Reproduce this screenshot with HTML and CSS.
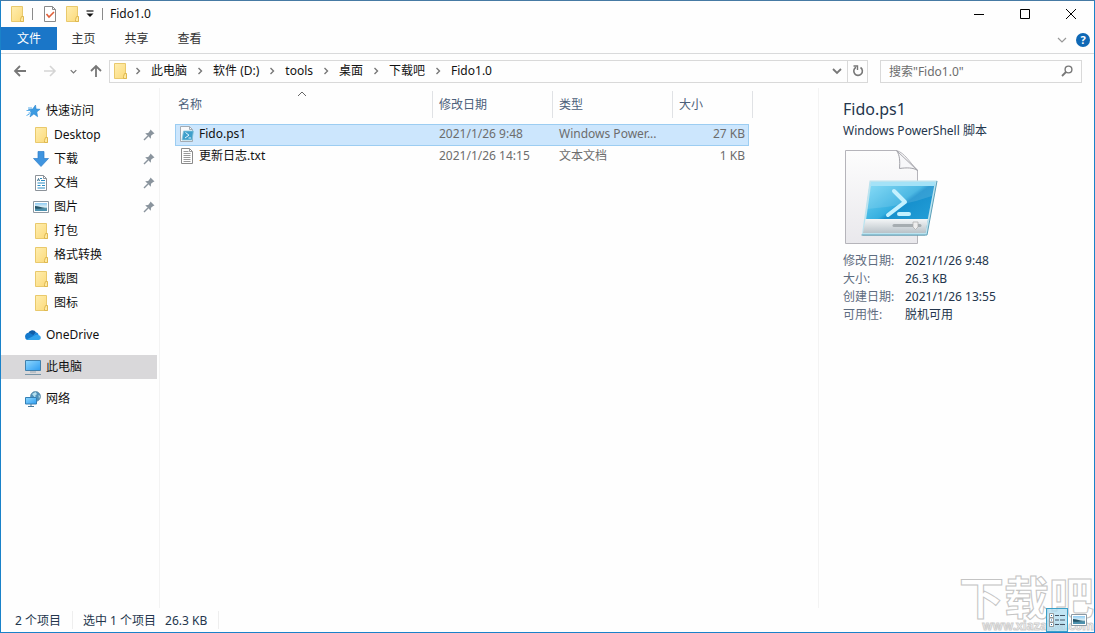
FILE: index.html
```html
<!DOCTYPE html>
<html lang="zh-CN">
<head>
<meta charset="utf-8">
<title>Fido1.0</title>
<link rel="stylesheet" href="styles.css">
</head>
<body>
<svg class="defs" width="0" height="0" aria-hidden="true">
  <defs>
    <linearGradient id="gFolder" x1="0" x2="1" y1="0" y2="1"><stop offset="0" stop-color="#ffeeb0"/><stop offset="1" stop-color="#fbd978"/></linearGradient>
    <linearGradient id="gScreen" x1="0" x2="1" y1="0" y2="1"><stop offset="0" stop-color="#8fd8ff"/><stop offset="1" stop-color="#2d9cf0"/></linearGradient>
    <linearGradient id="gPage" x1="0" x2="0" y1="0" y2="1"><stop offset="0" stop-color="#fdfdfd"/><stop offset="1" stop-color="#e9e8ec"/></linearGradient>
    <linearGradient id="gShell" x1="0" x2="1" y1="0" y2="1"><stop offset="0" stop-color="#7fdcf8"/><stop offset=".45" stop-color="#35afe0"/><stop offset=".5" stop-color="#1690cd"/><stop offset="1" stop-color="#2aa5dc"/></linearGradient>
    <linearGradient id="gBar" x1="0" x2="0" y1="0" y2="1"><stop offset="0" stop-color="#f4f6f7"/><stop offset="1" stop-color="#b9c2c8"/></linearGradient>
    <linearGradient id="gSea" x1="0" x2="0" y1="0" y2="1"><stop offset="0" stop-color="#8ecbf3"/><stop offset=".5" stop-color="#e0f0f5"/><stop offset=".7" stop-color="#4f8ca4"/><stop offset="1" stop-color="#4b94b4"/></linearGradient>
    <symbol id="folder" viewBox="0 0 16 16"><path d="M2.500.5h11v10l1 .5v4.500h-12z" fill="url(#gFolder)" stroke="#e9c96c"/><path d="M11.500 15.500v-2l1-3h2v5z" fill="#ffe9a0" stroke="#dfb850"/></symbol>
    <symbol id="star" viewBox="0 0 16 16"><path d="M10.500 2l.6 4 4 .3-3.300 2.600.8 4.800-3.700-2.800L5 14l1.300-4.800L3.500 6.500l4.200-.4z" fill="#3c9be2" stroke="#2b86d0" stroke-width=".6"/><path d="M3 5h4M1.500 7.500h4M3.500 10H6M1.500 12.500l3-1.500" stroke="#5aaeea" stroke-width="1"/></symbol>
    <symbol id="down" viewBox="0 0 16 16"><path d="M5 .5h6v7h4.500L8 15.500.5 7.500H5z" fill="#3f94df" stroke="#2d7cc8" stroke-width=".7"/></symbol>
    <symbol id="doc" viewBox="0 0 16 16"><path d="M2.500.5h8l3 3v12h-11z" fill="#fff" stroke="#8c9299"/><path d="M10.500.5v3h3" fill="none" stroke="#8c9299"/><path d="M7 3.500h2M8 5.500h4M4.500 8h7.500M4.500 10.500h3M9 10.500h3M4.500 13h7.500" stroke="#2c8ec4" stroke-width="1.200"/><path d="M4.500 6l1-2.500 1 2.500" fill="none" stroke="#3b6f8c"/></symbol>
    <symbol id="pic" viewBox="0 0 16 16"><path d="M.5 2.500h15v11H.5z" fill="#fff" stroke="#8d99a3"/><path d="M2 4h12v8H2z" fill="url(#gSea)"/><path d="M2 7c3 0 6 1.500 10 2-4 .5-7 1-10 .5z" fill="#245468"/></symbol>
    <symbol id="cloud" viewBox="0 0 16 16"><path d="M3.200 6.200a4.300 4.300 0 0 1 7.900-.8L8 9z" fill="#0f5ea8"/><path d="M.2 10.300a3.500 3.500 0 0 1 4.600-4.200L11 9.500 3 13A2.800 2.800 0 0 1 .2 10.300z" fill="#1479cc"/><path d="M8 8.500l3-3.200a3.400 3.400 0 0 1 2.700 3l-2 3z" fill="#1b86dc"/><path d="M1.500 12.500L8.500 9l3-1.200c2.400 0 4.300.7 4.300 2.900 0 1.300-1 2.300-2.300 2.300h-10z" fill="#32a4ec"/></symbol>
    <symbol id="pc" viewBox="0 0 16 16"><path d="M.5 1.500h15v10H.5z" fill="url(#gScreen)" stroke="#4080ac"/><path d="M5 13h6" stroke="#9aa8b2"/><path d="M0 15.500h16" stroke="#7894a6"/></symbol>
    <symbol id="net" viewBox="0 0 16 16"><circle cx="10.500" cy="5.500" r="5" fill="#4f8fb8" stroke="#5b8aa5" stroke-width=".7"/><path d="M7 3l3.500-2L12 3l-2 2 2 2-1 1zM13.500 4l1.500 1-1 3z" fill="#b5dfee"/><path d="M.5 6.500h11v6.500H.5z" fill="url(#gScreen)" stroke="#347fb4"/><path d="M6 13v2M3 15.500h6" stroke="#47799b"/></symbol>
    <symbol id="pin" viewBox="0 0 12 12"><path d="M7.500.5l4 4-1.300.5-2.200 1.800-.2 3L2.200 4.200l3-.2L7 1.800z" fill="#8a949d"/><path d="M5 7L1 11" stroke="#8a949d" stroke-width="1.400"/></symbol>
    <symbol id="crumb" viewBox="0 0 8 8"><path d="M2.500 1l3 3-3 3" fill="none" stroke="#777" stroke-width="1.400"/></symbol>
    <symbol id="chev" viewBox="0 0 10 10"><path d="M1 3l4 4 4-4" fill="none" stroke="currentColor" stroke-width="1.800"/></symbol>
    <symbol id="arrow" viewBox="0 0 14 14"><path d="M13 7H2M7 2L2 7l5 5" fill="none" stroke="currentColor" stroke-width="1.800"/></symbol>
    <symbol id="arrow-right" viewBox="0 0 14 14"><path d="M1 7h11M7 2l5 5-5 5" fill="none" stroke="currentColor" stroke-width="1.600"/></symbol>
    <symbol id="ps" viewBox="0 0 16 16"><path d="M1.500.5h9l3 3v12h-12z" fill="#f8f9fb" stroke="#a3abb3"/><path d="M10.500.5v3h3" fill="none" stroke="#a3abb3"/><path d="M4.500 5h10L13 14H3z" fill="#3f9fcb" stroke="#8cc6dd" stroke-width=".8"/><path d="M6.500 6.500L10 9.200 6 12M9.500 12h2.500" fill="none" stroke="#e3f6ff"/></symbol>
    <symbol id="txt" viewBox="0 0 16 16"><path d="M2.500.5h8l3 3v12h-11z" fill="#fff" stroke="#8a8a8a"/><path d="M10.500.5v3h3M4.500 3.500h5M4.500 5.500h7M4.500 7.500h7M4.500 9.500h7M4.500 11.500h7M4.500 13.500h7" fill="none" stroke="#999"/></symbol>
  </defs>
</svg>
<div class="window">
  <header class="titlebar">
    <svg class="i16"><use href="#folder"/></svg>
    <span class="rule rule-a"></span>
    <button class="bare" aria-label="属性"><svg class="i16" viewBox="0 0 16 16"><path d="M2.500.5h8l3 3v12h-11z" fill="#fff" stroke="#8a8a8a"/><path d="M10.500.5v3h3" fill="none" stroke="#8a8a8a"/><path d="M4.500 8l2.500 3 5-5" fill="none" stroke="#e0603a" stroke-width="1.600"/></svg></button>
    <button class="bare qa-folder" aria-label="新建文件夹"><svg class="i16"><use href="#folder"/></svg></button>
    <button class="bare qa-more" aria-label="自定义快速访问工具栏"><svg width="8" height="8" viewBox="0 0 8 8"><path d="M.5 1h7" stroke="#222" stroke-width="1.300"/><path d="M.5 3.500h7L4 7z" fill="#111"/></svg></button>
    <span class="rule rule-b"></span>
    <h1 class="caption">Fido1.0</h1>
    <div class="winbtns">
      <button class="bare" aria-label="最小化"><svg width="12" height="12"><path d="M1 6.500h10" stroke="#000"/></svg></button>
      <button class="bare" aria-label="最大化"><svg width="12" height="12"><path d="M1.500 1.500h9v9h-9z" fill="none" stroke="#000"/></svg></button>
      <button class="bare" aria-label="关闭"><svg width="12" height="12"><path d="M1 1l10 10M11 1L1 11" stroke="#000"/></svg></button>
    </div>
  </header>
  <div class="ribbon">
    <button class="tab tab-file">文件</button>
    <button class="tab">主页</button>
    <button class="tab">共享</button>
    <button class="tab">查看</button>
    <div class="ribbon-end">
      <button class="bare expand" aria-label="展开功能区"><svg width="10" height="10" viewBox="0 0 10 10"><path d="M1 3l4 4 4-4" fill="none" stroke="#999" stroke-width="1.200"/></svg></button>
      <button class="bare help" aria-label="帮助">?</button>
    </div>
  </div>
  <div class="addressbar">
    <button class="bare back" aria-label="后退"><svg width="14" height="14"><use href="#arrow"/></svg></button>
    <button class="bare forward" aria-label="前进"><svg width="14" height="14"><use href="#arrow-right"/></svg></button>
    <button class="bare recent" aria-label="最近位置"><svg width="7" height="7"><use href="#chev"/></svg></button>
    <button class="bare up" aria-label="上移"><svg width="14" height="14" viewBox="0 0 14 14"><path d="M7 13V2M2 7l5-5 5 5" fill="none" stroke="#777" stroke-width="1.800"/></svg></button>
    <nav class="path" aria-label="路径">
      <svg class="i16"><use href="#folder"/></svg>
      <svg class="sep first"><use href="#crumb"/></svg><a href="#">此电脑</a>
      <svg class="sep"><use href="#crumb"/></svg><a href="#">软件 (D:)</a>
      <svg class="sep"><use href="#crumb"/></svg><a href="#">tools</a>
      <svg class="sep"><use href="#crumb"/></svg><a href="#">桌面</a>
      <svg class="sep"><use href="#crumb"/></svg><a href="#">下载吧</a>
      <svg class="sep"><use href="#crumb"/></svg><a href="#">Fido1.0</a>
      <button class="bare drop" aria-label="以前的位置"><svg width="10" height="10"><use href="#chev"/></svg></button>
      <button class="bare refresh" aria-label="刷新"><svg width="12" height="12" viewBox="0 0 12 12"><path d="M4 2.300a4.300 4.300 0 1 0 4.500.2" fill="none" stroke="#777" stroke-width="1.600"/><path d="M1.500 1h4v4" fill="none" stroke="#777" stroke-width="1.400"/></svg></button>
    </nav>
    <label class="search">
      <input type="text" placeholder="搜索&quot;Fido1.0&quot;" aria-label="搜索">
      <svg width="12" height="12" viewBox="0 0 12 12"><circle cx="7.500" cy="4.500" r="3.400" fill="none" stroke="#777" stroke-width="1.400"/><path d="M5 7L1 11" stroke="#777" stroke-width="1.800"/></svg>
    </label>
  </div>
  <main class="content">
    <nav class="tree" aria-label="导航窗格">
      <a class="node" href="#"><svg class="i16"><use href="#star"/></svg>快速访问</a>
      <a class="node child" href="#"><svg class="i16"><use href="#folder"/></svg>Desktop<svg class="pin"><use href="#pin"/></svg></a>
      <a class="node child" href="#"><svg class="i16"><use href="#down"/></svg>下载<svg class="pin"><use href="#pin"/></svg></a>
      <a class="node child" href="#"><svg class="i16"><use href="#doc"/></svg>文档<svg class="pin"><use href="#pin"/></svg></a>
      <a class="node child" href="#"><svg class="i16"><use href="#pic"/></svg>图片<svg class="pin"><use href="#pin"/></svg></a>
      <a class="node child" href="#"><svg class="i16"><use href="#folder"/></svg>打包</a>
      <a class="node child" href="#"><svg class="i16"><use href="#folder"/></svg>格式转换</a>
      <a class="node child" href="#"><svg class="i16"><use href="#folder"/></svg>截图</a>
      <a class="node child" href="#"><svg class="i16"><use href="#folder"/></svg>图标</a>
      <a class="node root" href="#"><svg class="i16"><use href="#cloud"/></svg>OneDrive</a>
      <a class="node root current" href="#"><svg class="i16"><use href="#pc"/></svg>此电脑</a>
      <a class="node root" href="#"><svg class="i16"><use href="#net"/></svg>网络</a>
    </nav>
    <section class="files">
      <table>
        <colgroup><col class="c-name"><col class="c-date"><col class="c-type"><col class="c-size"><col class="c-end"></colgroup>
        <thead><tr>
          <th><div class="head">名称<svg class="sort" width="10" height="6"><path d="M1 5l4-4 4 4" fill="none" stroke="#666"/></svg></div></th>
          <th><div class="head">修改日期</div></th><th><div class="head">类型</div></th><th><div class="head open">大小</div></th><th><div class="head end"></div></th>
        </tr></thead>
        <tbody>
          <tr class="selected"><td class="name"><span><svg class="i16"><use href="#ps"/></svg>Fido.ps1</span></td><td>2021/1/26 9:48</td><td>Windows Power...</td><td class="num">27 KB</td></tr>
          <tr><td class="name"><span><svg class="i16"><use href="#txt"/></svg>更新日志.txt</span></td><td>2021/1/26 14:15</td><td>文本文档</td><td class="num">1 KB</td></tr>
        </tbody>
      </table>
    </section>
    <aside class="details">
      <h2>Fido.ps1</h2>
      <p class="kind">Windows PowerShell 脚本</p>
      <svg class="preview" width="96" height="96" viewBox="0 0 96 96">
        <path d="M2.500 1.500h51C62 4 66 13 74.500 21v73.500h-72z" fill="url(#gPage)" stroke="#b5b4ba"/>
        <path d="M53.500 1.500C57 6 57 13 56.500 19.500c7-1 14-1 18 2z" fill="#f7f7f9" stroke="#a2a2a8"/>
        <path d="M27 32h65L83 84.500l-1 2.500H19.500z" fill="#7c929e" opacity=".45"/>
        <path d="M27.500 32.500H93L83 85H20z" fill="url(#gShell)" stroke="#bce3ef" stroke-width="2"/>
        <path d="M22.500 70h62.500l-2.500 14H20z" fill="url(#gBar)"/>
        <path d="M28 33H92.500l-1 4H27z" fill="#a4e2f7"/>
        <path d="M24 60Q58 58 89 47L91 37H28z" fill="#fff" opacity=".12"/>
        <path d="M51 42l11 11-17 13M56 65h10" fill="none" stroke="#c4f1ff" stroke-width="4" stroke-linecap="round" stroke-linejoin="round"/>
        <path d="M51 76.500h26" stroke="#a6adb1" stroke-width="3" stroke-linecap="round"/>
        <path d="M70 73h5v5l-2.500 2.500L70 78z" fill="#eee" stroke="#aaa" stroke-width=".7"/>
        <path d="M18.500 86H84L94 32" fill="none" stroke="#5b9fb8"/>
      </svg>
      <dl>
        <dt>修改日期:</dt><dd>2021/1/26 9:48</dd>
        <dt>大小:</dt><dd>26.3 KB</dd>
        <dt>创建日期:</dt><dd>2021/1/26 13:55</dd>
        <dt>可用性:</dt><dd>脱机可用</dd>
      </dl>
    </aside>
  </main>
  <footer class="status">
    <span class="cell">2 个项目</span>
    <span class="cell"><span>选中 1 个项目</span><span>26.3 KB</span></span>
    <div class="views">
      <button class="view on" aria-label="详细信息"><svg width="16" height="14"><path d="M.5.5h4v4h-4zM.5 5h4v4h-4zM.5 9.500h4v4h-4z" fill="#fff" stroke="#888" stroke-width=".8"/><path d="M2 2.500h1M2 7h1M2 11.500h1" stroke="#176faa"/><path d="M6 2.500h4M11 2.500h5M6 7h4M11 7h5M6 11.500h4M11 11.500h5" stroke="#456"/></svg></button>
      <button class="view" aria-label="大图标"><svg width="16" height="16"><use href="#pic"/></svg></button>
    </div>
  </footer>
  <div class="watermark"><span class="wm-name">下载吧</span><span class="wm-site">www.xiazaiba.com</span></div>
</div>
</body>
</html>
```
FILE: styles.css
```css
* { box-sizing: border-box; }
body {
  margin: 0;
  font: 12px/18px "Noto Sans", "Noto Sans CJK SC", sans-serif;
  color: #111;
  background: #fff;
}
a { color: inherit; text-decoration: none; }
h1, h2, p, dl, dd { margin: 0; font-weight: 400; }
button, input { font: inherit; color: inherit; }
svg { display: block; flex: none; }
.defs { position: absolute; }
.i16 { width: 16px; height: 16px; }
.bare { border: 0; padding: 0; background: none; display: flex; align-items: center; justify-content: center; }

.window {
  position: relative;
  display: flex;
  flex-direction: column;
  min-height: 100vh;
  border: 1px solid #1a82c9;
  border-top-color: #467aa4;
  background: #fefefe;
}
.titlebar { display: flex; align-items: center; height: 26px; padding-left: 8px; }
.rule { width: 1px; height: 12px; background: #8a8a8a; }
.rule-a { margin: 0 9px 0 7px; }
.rule-b { margin: 0 7px 0 8px; }
.qa-folder { margin-left: 6px; }
.qa-more { margin-left: 6px; }
.caption { font-size: 12px; }
.winbtns { display: flex; margin-left: auto; }
.winbtns .bare { width: 46px; height: 25px; }

.ribbon { display: flex; height: 27px; border-bottom: 1px solid #d9dadb; }
.tab { width: 53px; height: 23px; padding: 0; border: 0; background: none; color: #333; }
.tab-file { width: 56px; background: #1a76c8; color: #fff; }
.ribbon-end { display: flex; gap: 9px; margin-left: auto; padding-right: 4px; align-items: center; }
.help { width: 14px; height: 14px; border-radius: 50%; background: #0f68b5; color: #fff; font-weight: 700; font-size: 11px; line-height: 14px; }

.addressbar { display: flex; align-items: center; height: 34px; padding: 0 12px; color: #777; }
.forward { margin-left: 16px; color: #d5d5d5; }
.recent { margin-left: 13px; }
.up { margin: 0 6px 0 12px; }
.path { flex: 1; display: flex; align-items: center; height: 23px; border: 1px solid #d9d9d9; color: #111; padding-left: 2px; }
.sep { width: 8px; height: 8px; margin: 0 9px; }
.sep.first { margin: 0 9px 0 6px; }
.drop { width: 20px; height: 21px; margin-left: auto; color: #777; }
.refresh { width: 20px; height: 21px; border-left: 1px solid #d9d9d9; }
.search { display: flex; align-items: center; width: 202px; height: 23px; margin-left: 12px; padding: 0 8px; border: 1px solid #d9d9d9; }
.search input { flex: 1; min-width: 0; height: 20px; padding: 0; border: 0; outline: 0; background: none; }
.search input::placeholder { color: #6d6d6d; opacity: 1; }

.content { flex: 1; display: flex; }
.tree { width: 159px; padding: 11px 2px 0 0; border-right: 1px solid #f3f3f3; }
.node { display: flex; align-items: center; gap: 5px; height: 24px; padding: 0 2px 0 24px; }
.child { padding-left: 32px; }
.root { margin-top: 8px; }
.current { background: #d9d8da; }
.pin { width: 12px; height: 12px; margin-left: auto; }

.files { flex: 1; padding: 3px 15px 0; }
table { border-collapse: separate; border-spacing: 0; table-layout: fixed; width: 578px; }
.c-name { width: 258px; }
.c-date, .c-type { width: 120px; }
.c-size { width: 76px; }
.c-end { width: 4px; }
th { padding: 0 0 6px; font-weight: 400; text-align: left; color: #4c607a; }
.head { position: relative; height: 27px; padding-left: 6px; line-height: 27px; border-right: 1px solid #e0e2e5; }
.head.open { border-right: 0; }
.head.end { padding: 0; }
th:first-child .head { padding-left: 3px; }
.sort { position: absolute; left: 122px; top: 0; }
td { height: 21px; padding: 0 0 2px 6px; line-height: 18px; color: #6d6d6d; white-space: nowrap; overflow: hidden; }
.name { padding-left: 4px; color: #111; }
.name span { display: flex; align-items: center; gap: 4px; }
.num { padding: 0 4px 2px 0; text-align: right; }
.selected td { height: 22px; background: #cce6fd; border: solid #9ccdf2; border-width: 1px 0; }
.selected td:first-child { border-left-width: 1px; padding-left: 3px; }
.selected td:last-child { border-right-width: 1px; padding-right: 3px; }

.details { width: 276px; padding: 10px 10px 0 24px; border-left: 1px solid #f3f3f3; color: #24364d; }
.details h2 { font-size: 16px; line-height: 22px; }
.kind { line-height: 22px; }
.preview { margin: 7px 0; }
dl { display: grid; grid-template-columns: 62px 1fr; line-height: 18px; }
dt { color: #5e6c80; }

.status { display: flex; align-items: center; height: 24px; padding-left: 14px; color: #24364d; }
.cell { display: flex; gap: 9px; padding: 2px 11px 0 0; margin-right: 10px; border-right: 1px solid #eee; line-height: 16px; }
.views { position: relative; z-index: 2; display: flex; margin-left: auto; padding-right: 4px; }
.view { display: flex; align-items: center; justify-content: center; width: 22px; height: 24px; padding: 0; border: 1px solid transparent; background: none; }
.view.on { border-color: #3aa0c8; background: rgba(168, 218, 240, .7); }

.watermark { position: absolute; right: 0; bottom: 0; display: flex; flex-direction: column; align-items: flex-end; color: #fff; font-weight: 700; pointer-events: none; }
.wm-name { font-size: 45px; line-height: 45px; -webkit-text-stroke: 1px #c4c4c4; }
.wm-site { font-size: 12px; line-height: 12px; -webkit-text-stroke: 1px #cfcfcf; }
```
